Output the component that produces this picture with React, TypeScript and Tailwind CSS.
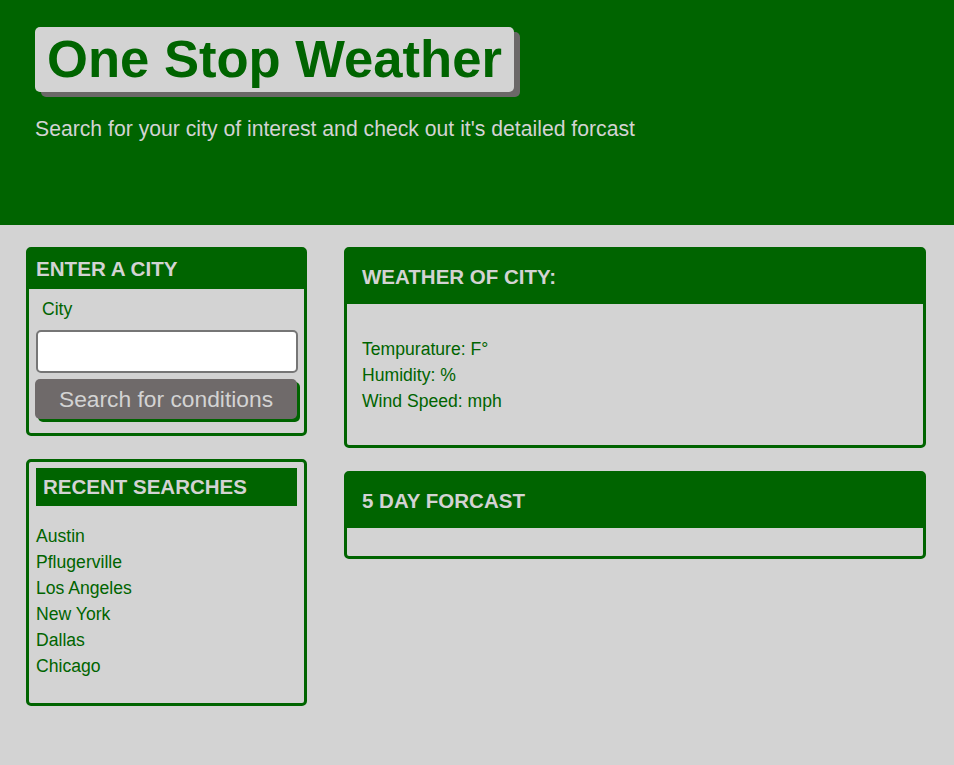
import React from 'react';

const recentSearches = ['Austin', 'Pflugerville', 'Los Angeles', 'New York', 'Dallas', 'Chicago'];

const App = () => {
  return (
    <div className="min-h-screen bg-[#d3d3d3] font-['Liberation_Sans',Arial,sans-serif]">
      <header className="h-[225px] bg-[#006400] pl-[35px] pt-[27px]">
        <div className="inline-flex h-[65px] items-center rounded-[5px] bg-[#d3d3d3] px-[12px] shadow-[6px_5px_0_#6b6868]">
          <h1 className="text-[52.6px] font-bold leading-none text-[#006400]">One Stop Weather</h1>
        </div>
        <p className="mt-[25px] text-[21.2px] leading-[24px] text-[#d3d3d3]">
          Search for your city of interest and check out it's detailed forcast
        </p>
      </header>

      <main className="flex gap-[37px] pl-[26px] pr-[28px] pt-[22px] pb-[40px]">
        {/* left column */}
        <div className="flex w-[281px] shrink-0 flex-col gap-[23px]">
          <section className="rounded-[5px] border-[3px] border-[#006400]">
            <h2 className="flex h-[39px] items-center bg-[#006400] px-[7px] text-[20.6px] font-bold text-[#d3d3d3]">
              ENTER A CITY
            </h2>
            <div className="px-[7px] pb-[14px] pr-[6px]">
              <label className="mt-[10px] block pl-[6px] text-[17.6px] leading-[21px] text-[#006400]">City</label>
              <input
                type="text"
                className="mt-[10px] block h-[43px] w-full rounded-[5px] border-2 border-[#767676] bg-white px-2 text-[18px]"
              />
              <button className="mt-[6px] block h-[40px] w-full -translate-x-px rounded-[5px] bg-[#6f6a6a] text-[22.8px] text-[#d3d3d3] shadow-[3px_3px_0_#006400]">
                Search for conditions
              </button>
            </div>
          </section>

          <section className="rounded-[5px] border-[3px] border-[#006400] px-[7px] pb-[24px] pt-[6px]">
            <h2 className="flex h-[38px] items-center bg-[#006400] px-[7px] text-[20.5px] font-bold text-[#d3d3d3]">
              RECENT SEARCHES
            </h2>
            <ul className="mt-[17px]">
              {recentSearches.map((city) => (
                <li key={city} className="text-[17.6px] leading-[26px] text-[#006400]">
                  {city}
                </li>
              ))}
            </ul>
          </section>
        </div>

        {/* right column */}
        <div className="flex flex-1 flex-col gap-[23px]">
          <section className="rounded-[5px] border-[3px] border-[#006400]">
            <h2 className="flex h-[54px] items-center bg-[#006400] px-[15px] text-[20.5px] font-bold text-[#d3d3d3]">
              WEATHER OF CITY:
            </h2>
            <div className="px-[15px] pb-[31px] pt-[32px] text-[17.6px] leading-[26px] text-[#006400]">
              <p>Tempurature: F°</p>
              <p>Humidity: %</p>
              <p>Wind Speed: mph</p>
            </div>
          </section>

          <section className="rounded-[5px] border-[3px] border-[#006400]">
            <h2 className="flex h-[54px] items-center bg-[#006400] px-[15px] text-[20.5px] font-bold text-[#d3d3d3]">
              5 DAY FORCAST
            </h2>
            <div className="h-[28px]" />
          </section>
        </div>
      </main>
    </div>
  );
};

export default App;
